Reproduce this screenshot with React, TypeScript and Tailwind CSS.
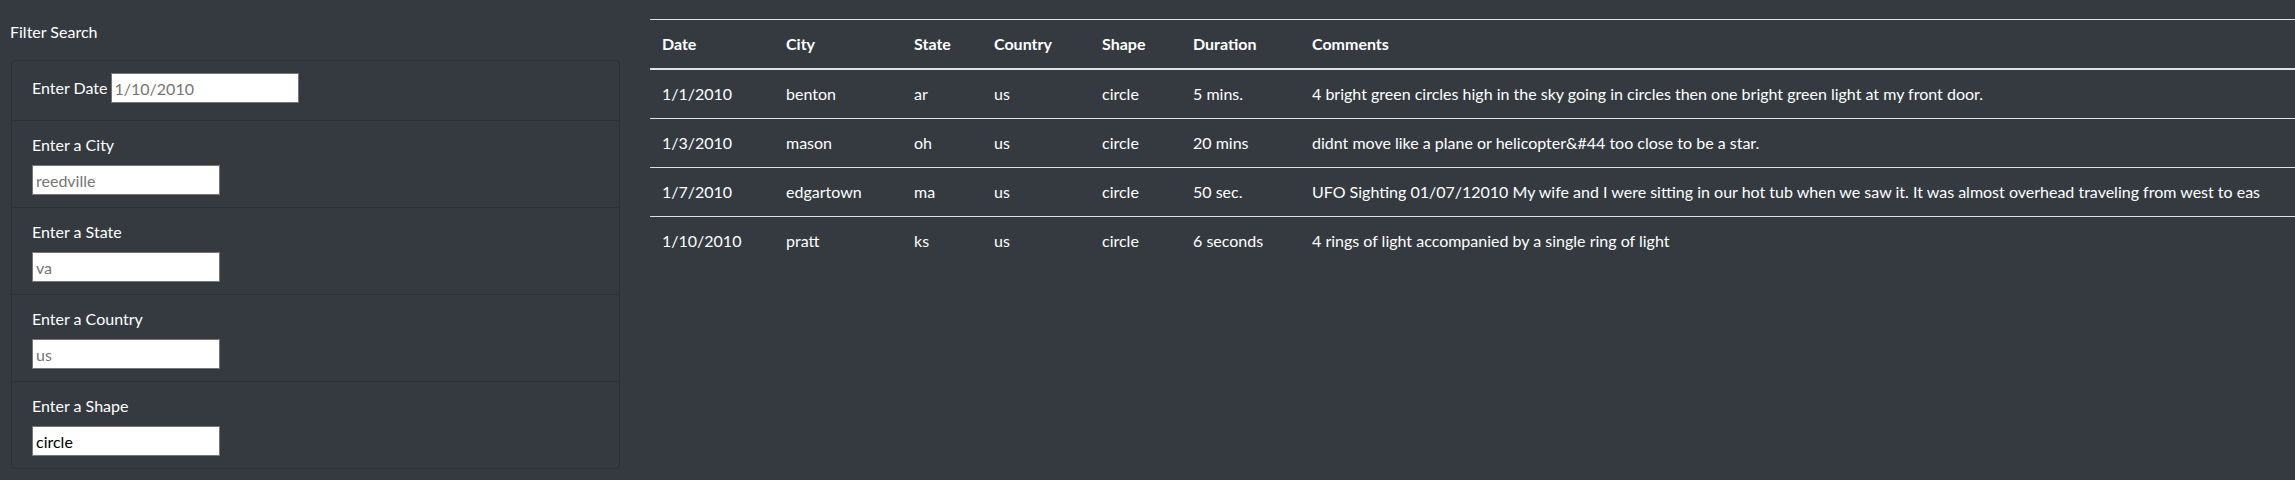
const rows = [
  {
    date: '1/1/2010',
    city: 'benton',
    state: 'ar',
    country: 'us',
    shape: 'circle',
    duration: '5 mins.',
    comments:
      '4 bright green circles high in the sky going in circles then one bright green light at my front door.',
  },
  {
    date: '1/3/2010',
    city: 'mason',
    state: 'oh',
    country: 'us',
    shape: 'circle',
    duration: '20 mins',
    comments: 'didnt move like a plane or helicopter&#44 too close to be a star.',
  },
  {
    date: '1/7/2010',
    city: 'edgartown',
    state: 'ma',
    country: 'us',
    shape: 'circle',
    duration: '50 sec.',
    comments:
      'UFO Sighting 01/07/12010 My wife and I were sitting in our hot tub when we saw it. It was almost overhead traveling from west to eas',
  },
  {
    date: '1/10/2010',
    city: 'pratt',
    state: 'ks',
    country: 'us',
    shape: 'circle',
    duration: '6 seconds',
    comments: '4 rings of light accompanied by a single ring of light',
  },
];

const filters = [
  { label: 'Enter a City', placeholder: 'reedville' },
  { label: 'Enter a State', placeholder: 'va' },
  { label: 'Enter a Country', placeholder: 'us' },
  { label: 'Enter a Shape', value: 'circle' },
];

const inputClass =
  "w-[188px] h-[30px] bg-white border border-[#767676] px-[3px] text-base text-black placeholder:text-[#757575] outline-none font-['Lato',sans-serif]";

const App = () => {
  return (
    <div className="min-h-[480px] bg-[#343a40] text-white font-['Lato',sans-serif] text-base leading-6 flex overflow-hidden">
      <div className="w-[650px] shrink-0 pl-[10px] pt-5">
        <div className="mb-4">Filter Search</div>
        <ul className="w-[609px] ml-px border border-black/15 rounded">
          <li className="h-[59px] px-5 pt-3 flex items-start">
            <label className="mt-[3px] mr-[3px]">Enter Date</label>
            <input className={inputClass} placeholder="1/10/2010" />
          </li>
          {filters.map((f) => (
            <li key={f.label} className="h-[87px] px-5 pt-3 border-t border-black/15">
              <label className="block mb-2">{f.label}</label>
              <input
                className={inputClass}
                placeholder={f.placeholder}
                defaultValue={f.value}
              />
            </li>
          ))}
        </ul>
      </div>

      <div className="flex-1 min-w-0">
        {/* intro line scrolled mostly out of view */}
        <div className="h-[19px] overflow-hidden pl-[660px] whitespace-nowrap">
          <p className="-mt-[21px]">
            Apply any of the filters to query the sightings, then display every matching report below
          </p>
        </div>
        <table className="w-full border-collapse table-fixed">
          <colgroup>
            <col className="w-[124px]" />
            <col className="w-[128px]" />
            <col className="w-[80px]" />
            <col className="w-[108px]" />
            <col className="w-[91px]" />
            <col className="w-[119px]" />
            <col />
          </colgroup>
          <thead>
            <tr className="border-t border-b-2 border-t-[#dee2e6] border-b-[#dee2e6]">
              {['Date', 'City', 'State', 'Country', 'Shape', 'Duration', 'Comments'].map((h) => (
                <th key={h} className="p-3 text-left font-bold">
                  {h}
                </th>
              ))}
            </tr>
          </thead>
          <tbody>
            {rows.map((r, i) => (
              <tr key={r.date} className={i > 0 ? 'border-t border-[#dee2e6]' : ''}>
                <td className="p-3">{r.date}</td>
                <td className="p-3">{r.city}</td>
                <td className="p-3">{r.state}</td>
                <td className="p-3">{r.country}</td>
                <td className="p-3">{r.shape}</td>
                <td className="p-3">{r.duration}</td>
                <td className="p-3 whitespace-nowrap">{r.comments}</td>
              </tr>
            ))}
          </tbody>
        </table>
      </div>
    </div>
  );
};

export default App;
